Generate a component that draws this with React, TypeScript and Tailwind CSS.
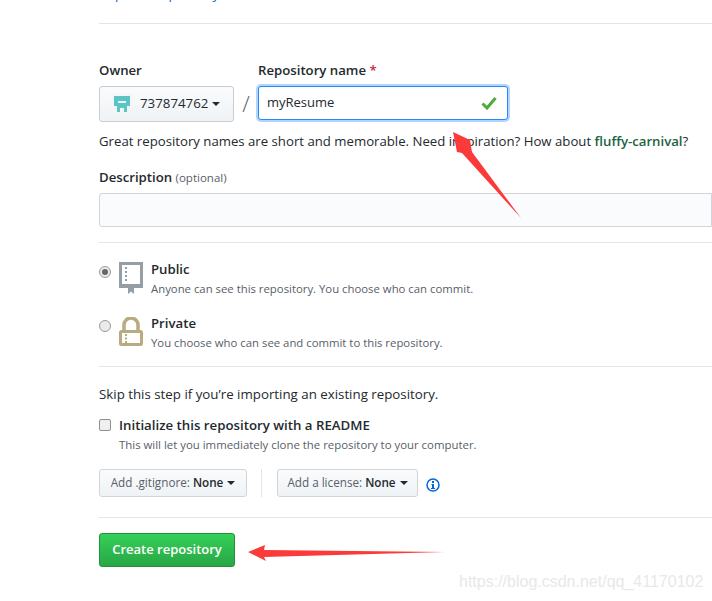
import React from 'react';

const Caret = () => (
  <span className="ml-[4px] inline-block h-0 w-0 border-x-[4px] border-t-[4px] border-x-transparent border-t-[#24292e]" />
);

const Identicon = () => (
  <svg width="20" height="20" viewBox="0 0 20 20" className="mr-[8px]">
    <rect width="20" height="20" fill="#f3f6f5" />
    <path d="M2 2h16v10h-3v6h-3v-4H8v4H5v-6H2z" fill="#5cc4c4" />
    <rect x="6" y="7" width="8" height="2" fill="#e6f5f5" />
  </svg>
);

const RepoIcon = () => (
  <svg width="24" height="32" viewBox="0 0 24 32" className="mt-[1px]">
    <path d="M1.5 1.5h21v22.5h-21z" fill="none" stroke="#959da5" strokeWidth="3" />
    <path d="M0 22h24v4H0z" fill="#959da5" />
    <path d="M9 24h6v8l-3-2.5L9 32z" fill="#959da5" />
    <path d="M6 5h2v2H6zM6 9h2v2H6zM6 13h2v2H6zM6 17h2v2H6z" fill="#959da5" />
  </svg>
);

const LockIcon = () => (
  <svg width="24" height="29" viewBox="0 0 24 29" className="mt-[2px]">
    <path d="M5 13V8a7 7 0 0 1 14 0v5" fill="none" stroke="#b8ab80" strokeWidth="3.5" />
    <rect x="1.5" y="14.5" width="21" height="13" rx="1" fill="#fff" stroke="#b8ab80" strokeWidth="3" />
    <path d="M6 17h2v2H6zM6 20.5h2v2H6zM6 24h2v2H6z" fill="#b8ab80" />
  </svg>
);

const VisibilityOption = ({
  checked,
  icon,
  title,
  note,
}: {
  checked: boolean;
  icon: React.ReactNode;
  title: string;
  note: string;
}) => (
  <div className="flex items-start">
    <span className="mt-[5px] flex h-[12px] w-[12px] items-center justify-center rounded-full border border-[#9a9a9a] bg-[#ebebeb]">
      {checked && <span className="h-[6px] w-[6px] rounded-full bg-[#666]" />}
    </span>
    <span className="ml-[8px] w-[32px]">{icon}</span>
    <div>
      <div className="text-[13.2px] leading-[16px] font-semibold text-[#24292e]">{title}</div>
      <div className="mt-[4px] text-[11.35px] leading-[16px] text-[#586069]">{note}</div>
    </div>
  </div>
);

const SelectButton = ({ label, width }: { label: string; width: string }) => (
  <div
    className={`flex h-[28px] ${width} items-center justify-center rounded-[3px] border border-[#d1d5da] bg-gradient-to-b from-[#fafbfc] to-[#eff3f6] text-[11.7px] text-[#586069]`}
  >
    {label}:&nbsp;<span className="font-semibold text-[#24292e]">None</span>
    <Caret />
  </div>
);

export default function App() {
  return (
    <div
      className="relative h-[601px] w-[712px] overflow-hidden bg-white text-[#24292e]"
      style={{ fontFamily: '"Open Sans", "Noto Sans", sans-serif' }}
    >
      <div className="pl-[99px]">
        <div className="flex h-[24px] items-start overflow-hidden border-b border-[#e1e4e8]">
          <div className="-mt-[15px] text-[13.3px] leading-[18px] text-[#0366d6]">Import a repository.</div>
        </div>

        {/* Owner / name */}
        <div className="mt-[38px] flex">
          <div className="w-[135px]">
            <div className="h-[24px] text-[13.2px] leading-[17px] font-semibold">Owner</div>
            <div className="flex h-[36px] items-center rounded-[3px] border border-[#c9ccd0] bg-gradient-to-b from-[#fafbfc] to-[#eff3f6] pl-[12px] text-[13.3px] font-medium">
              <Identicon />
              737874762
              <Caret />
            </div>
          </div>
          <div className="mt-[24px] w-[24px] text-center text-[22px] leading-[34px] font-light text-[#586069]">/</div>
          <div className="w-[250px]">
            <div className="h-[24px] text-[13.2px] leading-[17px] font-semibold">
              Repository name <span className="text-[#cb2431]">*</span>
            </div>
            <div className="flex h-[34px] items-center justify-between rounded-[3px] border border-[#2188ff] bg-white pr-[10px] pl-[8px] text-[13px] shadow-[0_0_0_2px_#b4d5fb]">
              <span>myResume</span>
              <svg width="16" height="14" viewBox="0 0 16 14">
                <path d="M1.5 7.5l4.5 4.5 8.5-10" fill="none" stroke="#4eab38" strokeWidth="3" />
              </svg>
            </div>
          </div>
        </div>

        <p className="mt-[9px] text-[13.2px] leading-[20px] whitespace-nowrap">
          Great repository names are short and memorable. Need inspiration? How about{' '}
          <span className="font-semibold text-[#22633f]">fluffy-carnival</span>?
        </p>

        <div className="mt-[18px] h-[24px] text-[13.2px] leading-[16px] font-semibold">
          Description <span className="text-[11.5px] font-normal text-[#586069]">(optional)</span>
        </div>
        <div className="h-[34px] rounded-l-[3px] border border-[#d1d5da] bg-[#fafbfc]" />

        <div className="mt-[15px] flex flex-col gap-[18px] border-t border-[#e1e4e8] pt-[18px]">
          <VisibilityOption
            checked
            icon={<RepoIcon />}
            title="Public"
            note="Anyone can see this repository. You choose who can commit."
          />
          <VisibilityOption
            checked={false}
            icon={<LockIcon />}
            title="Private"
            note="You choose who can see and commit to this repository."
          />
        </div>

        <div className="mt-[15px] border-t border-[#e1e4e8] pt-[17px]">
          <p className="text-[13.3px] leading-[20px]">Skip this step if you’re importing an existing repository.</p>
          <div className="mt-[12px] flex items-center">
            <span className="h-[12px] w-[12px] rounded-[2px] border border-[#8f8f8f] bg-[#efefef]" />
            <span className="ml-[8px] text-[13.25px] leading-[18px] font-semibold">Initialize this repository with a README</span>
          </div>
          <p className="mt-[2px] ml-[20px] text-[11.4px] leading-[18px] text-[#586069]">
            This will let you immediately clone the repository to your computer.
          </p>
          <div className="mt-[15px] flex items-center">
            <SelectButton label="Add .gitignore" width="w-[148px]" />
            <span className="mr-[15px] ml-[14px] h-[28px] w-px bg-[#e1e4e8]" />
            <SelectButton label="Add a license" width="w-[141px]" />
            <svg width="14" height="14" viewBox="0 0 14 14" className="mt-[4px] ml-[8px]">
              <circle cx="7" cy="7" r="6" fill="none" stroke="#0366d6" strokeWidth="1.5" />
              <path d="M6 3h2v2H6zM5.5 6H8v4h1v1H5v-1h1V7h-.5z" fill="#0366d6" />
            </svg>
          </div>
        </div>

        <div className="mt-[20px] border-t border-[#e1e4e8] pt-[15px]">
          <button className="h-[34px] w-[136px] rounded-[3px] border border-[#23923d] bg-gradient-to-b from-[#34d058] to-[#28a745] text-[13px] font-semibold text-white">
            Create repository
          </button>
        </div>
      </div>

      {/* red annotation arrows */}
      <svg width="712" height="601" viewBox="0 0 712 601" className="pointer-events-none absolute top-0 left-0">
        <path d="M453 132L470 140L472 152L521 218L462 153L457 152z" fill="#fb3a3a" />
        <path d="M248 552L265 545L264 550L445 552L264 557L266 561z" fill="#fb3a3a" />
      </svg>

      <div
        className="absolute top-[573px] left-[459px] text-[16px] leading-[18px] whitespace-nowrap text-[#e8e8e8]"
        style={{ fontFamily: '"Liberation Sans", sans-serif' }}
      >
        https://blog.csdn.net/qq_41170102
      </div>
    </div>
  );
}
